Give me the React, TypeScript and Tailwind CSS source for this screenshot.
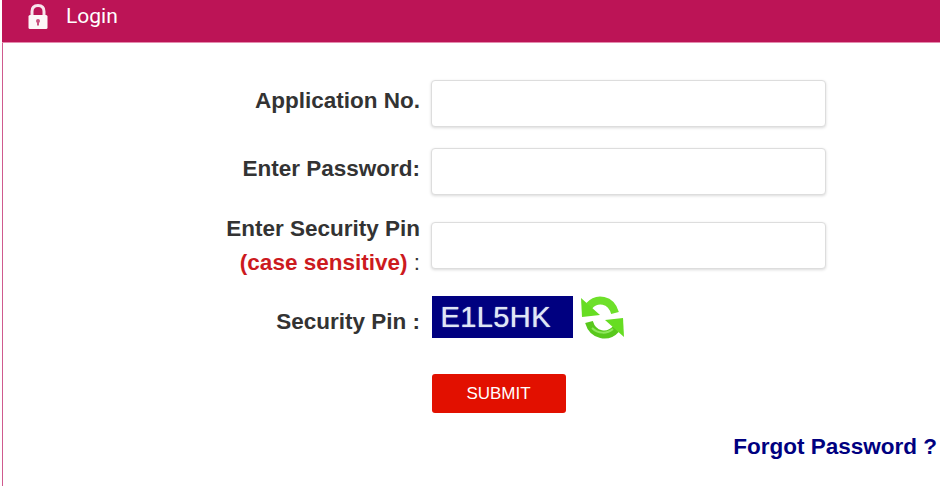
const labelClass = "w-[417px] shrink-0 text-right text-[22.5px] font-bold text-[#333333]";
const inputClass = "ml-[11px] block w-[395px] h-[47px] rounded-[4px] border border-[#dddddd] bg-white shadow-[0_1px_3px_rgba(0,0,0,0.15)]";

function LockIcon() {
  return (
    <svg width="22" height="27" viewBox="0 0 22 27">
      <path d="M5 13 V8.5 C5 4.5 7.5 2.5 11 2.5 C14.500 2.500 17 4.500 17 8.500 V13" fill="none" stroke="#f8e4ec" strokeWidth="3" />
      <rect x="1.500" y="12" width="19" height="14" rx="1.500" fill="#fdf6f8" />
      <circle cx="11" cy="18" r="2" fill="#c9507f" />
      <rect x="10" y="18" width="2" height="4.500" fill="#c9507f" />
    </svg>
  );
}

function RefreshIcon() {
  return (
    <svg width="55" height="55" viewBox="0 0 55 55" className="ml-[2px] shrink-0">
      <path d="M40 23 C36 9 22 7 14 16" fill="none" stroke="#6ee02a" strokeWidth="8" />
      <polygon points="6,8 7,27 25,25" fill="#66dd22" />
      <path d="M14 32 C18 46 33 48 41 39" fill="none" stroke="#58c81c" strokeWidth="8" />
      <path d="M17 38 C23 44 32 44 38 39" fill="none" stroke="#8ee85c" strokeWidth="2" />
      <polygon points="49,47 48,28 30,30" fill="#66dd22" />
    </svg>
  );
}

export default function App() {
  return (
    <div className="w-[940px] h-[486px] overflow-hidden bg-white pl-[2px] font-['Liberation_Sans',Arial,sans-serif]">
      <div className="flex items-start h-[43px] bg-[#bc1456] border-b border-[#e58bae] pl-[25px] pt-[3px] text-white">
        <LockIcon />
        <span className="ml-[17px] text-[21px] leading-[26px] font-['Roboto',sans-serif]">Login</span>
      </div>
      <div className="h-[443px] border-l border-[#cf5a8e] pt-[37px]">
        <div className="flex items-center">
          <div className={`${labelClass} pb-[6px]`}>Application No.</div>
          <input className={inputClass} />
        </div>
        <div className="flex items-center mt-[21px]">
          <div className={`${labelClass} pb-[6px]`}>Enter Password:</div>
          <input className={inputClass} />
        </div>
        <div className="flex items-start h-[47px] mt-[27px]">
          <div className={labelClass}>
            <div className="leading-[34px] -mt-[10px]">Enter Security Pin</div>
            <div className="leading-[34px]"><span className="text-[#cc1a1e]">(case sensitive)</span> <span className="font-normal">:</span></div>
          </div>
          <input className={inputClass} />
        </div>
        <div className="flex items-center h-[42px] mt-[27px]">
          <div className={`${labelClass} pt-[10px]`}>Security Pin :</div>
          <div className="ml-[11.5px] w-[141px] h-[42px] bg-[#000080] pl-[9px] text-[29px] leading-[42px] text-[#dfe6f5] tracking-[0.4px] [text-shadow:0_0_1px_#dfe6f5]">E1L5HK</div>
          <RefreshIcon />
        </div>
        <div className="mt-[36px] pl-[428.5px]">
          <button className="w-[134px] h-[39px] rounded-[3px] bg-[#e21000] text-white text-[17px]">SUBMIT</button>
        </div>
        <div className="mt-[19px] pr-[3px] text-right text-[22.5px] leading-[30px] font-bold text-[#000080]">Forgot Password ?</div>
      </div>
    </div>
  );
}
